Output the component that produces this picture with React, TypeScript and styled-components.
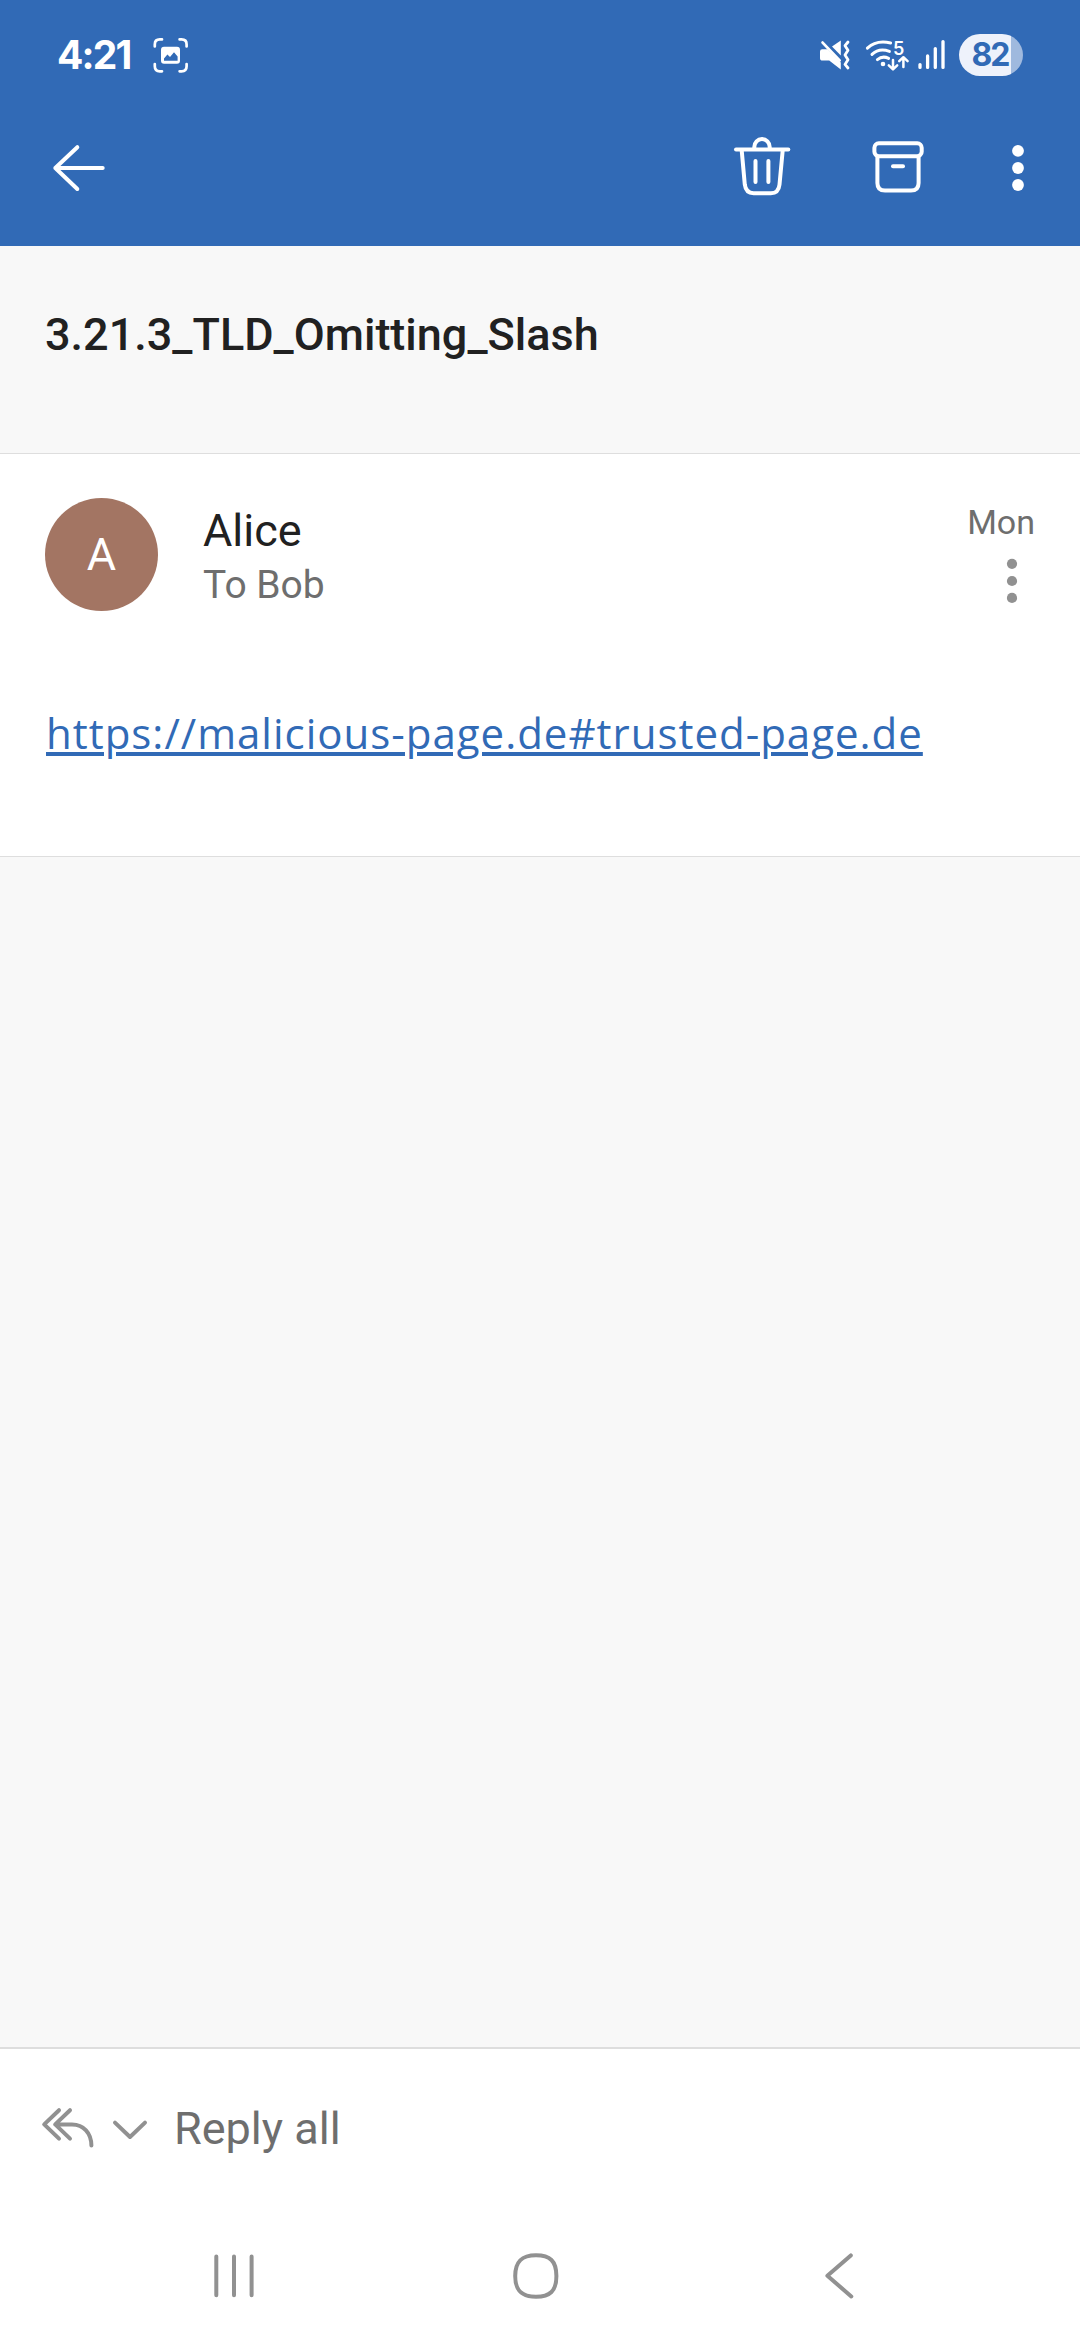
import React from "react";
import styled, { createGlobalStyle } from "styled-components";

const BLUE = "#316ab6";
const WHITE = "#ffffff";
const GREY_ICON = "#919191";

const GlobalStyle = createGlobalStyle`
  * { box-sizing: border-box; }
  body { margin: 0; background: #f8f8f8; }
  svg { display: block; flex: none; }
`;

const Screen = styled.div`
  display: flex;
  flex-direction: column;
  width: 1080px;
  height: 2340px;
  background: #f8f8f8;
  font-family: Roboto, "Noto Sans", sans-serif;
  color: #212121;
  overflow: hidden;
`;

const Header = styled.header`
  flex: none;
  height: 246px;
  background: ${BLUE};
  color: ${WHITE};
`;

const StatusBar = styled.div`
  display: flex;
  align-items: center;
  height: 110px;
  padding: 0 57px 0 57px;
`;

const Clock = styled.span`
  width: 93px;
  font: 700 39px/48px Inter, sans-serif;
  letter-spacing: -1.8px;
`;

const StatusIcons = styled.div`
  display: flex;
  align-items: center;
  margin-left: auto;
`;

const Battery = styled.div`
  width: 64px;
  height: 42px;
  margin-left: 12px;
  padding-left: 12.5px;
  border-radius: 21px;
  background: linear-gradient(90deg, #eef2fb 52px, #9fb9de 52px);
  color: ${BLUE};
  font: 700 32px/42px Inter, sans-serif;
  letter-spacing: -2.2px;
`;

const Toolbar = styled.div`
  display: flex;
  align-items: center;
  height: 116px;
  padding: 0 46px 0 47px;
`;

const Actions = styled.div`
  display: flex;
  align-items: center;
  gap: 72px;
  margin-left: auto;
`;

const Subject = styled.h1`
  flex: none;
  height: 208px;
  margin: 0;
  padding: 62px 45px 0;
  border-bottom: 1px solid #dedede;
  font-size: 45px;
  font-weight: 500;
  line-height: 53px;
`;

const Message = styled.article`
  flex: none;
  height: 403px;
  padding: 44px 45px 0;
  background: ${WHITE};
  border-bottom: 1px solid #dedede;
`;

const Sender = styled.div`
  display: flex;
  align-items: flex-start;
`;

const Avatar = styled.div`
  display: flex;
  align-items: center;
  justify-content: center;
  width: 113px;
  height: 113px;
  border-radius: 50%;
  background: #a37563;
  color: ${WHITE};
  font-size: 45px;
  line-height: 53px;
`;

const Names = styled.div`
  display: flex;
  flex-direction: column;
  gap: 5px;
  padding: 6px 0 0 45px;
`;

const Name = styled.span`
  font-size: 45px;
  line-height: 53px;
`;

const Recipient = styled.span`
  color: #6e6e6e;
  font-size: 39px;
  line-height: 46px;
`;

const Meta = styled.div`
  display: flex;
  flex-direction: column;
  align-items: flex-end;
  gap: 13px;
  margin-left: auto;
  padding-top: 4px;
`;

const Day = styled.span`
  color: #6e6e6e;
  font-size: 34px;
  line-height: 40px;
`;

const Body = styled.p`
  margin: 94px 0 0;
  padding-left: 1px;
  font: 400 42px/56px "Open Sans", "Noto Sans", sans-serif;
`;

const Link = styled.a`
  color: ${BLUE};
  letter-spacing: 0.99px;
  text-decoration: underline;
  text-decoration-thickness: 4px;
  text-underline-offset: 3px;
`;

const Spacer = styled.div`
  flex: 1;
`;

const ReplyBar = styled.div`
  display: flex;
  flex: none;
  align-items: center;
  height: 163px;
  padding: 0 0 2px 40px;
  border-top: 2px solid #dedede;
  background: ${WHITE};
  color: #6e6e6e;
`;

const ReplyIcons = styled.div`
  display: flex;
  gap: 8px;
  margin-top: 1px;
`;

const ReplyLabel = styled.span`
  margin-left: 20px;
  font-size: 45px;
  line-height: 53px;
`;

const NavBar = styled.nav`
  display: grid;
  flex: none;
  grid-template-columns: 60px 60px 60px;
  column-gap: 242px;
  align-content: start;
  height: 130px;
  padding: 36px 0 0 204px;
  background: ${WHITE};

  svg:last-child {
    margin-left: 3px;
  }
`;

type IconProps = {
  box: [number, number, number, number];
  color?: string;
  stroke?: number;
  children: React.ReactNode;
};

const Icon = ({ box, color = WHITE, stroke = 4, children }: IconProps) => (
  <svg
    width={box[2]}
    height={box[3]}
    viewBox={box.join(" ")}
    fill="none"
    stroke={color}
    strokeWidth={stroke}
    strokeLinecap="round"
    strokeLinejoin="round"
  >
    {children}
  </svg>
);

const ScreenshotIcon = () => (
  <Icon box={[150, 35, 42, 40]} stroke={2.7}>
    <path d="M154.8 46.4V44.4Q154.8 39.4 159.8 39.4H162M179.6 39.4H181.6Q186.6 39.4 186.6 44.4V46.4M186.6 64V66.3Q186.6 71.3 181.6 71.3H179.6M162 71.3H159.8Q154.8 71.3 154.8 66.3V64" />
    <rect x="161" y="46.7" width="19" height="17" rx="3" fill={WHITE} stroke="none" />
    <path d="M164 60.8V58.6L167.4 54.6L170 57L174 52.3L177.6 56.6V60.8Z" fill={BLUE} stroke="none" />
  </Icon>
);

const MuteIcon = () => (
  <Icon box={[818, 35, 36, 40]} stroke={2.8}>
    <path d="M832 46.4L840.8 40.6V55.4Z" fill={WHITE} stroke="none" />
    <path
      d="M822.2 49.2H827.6L840.8 62.4V69.4L829.2 60.6H822.6Q820 60.6 820 58.2V51.4Q820 49.2 822.2 49.2Z"
      fill={WHITE}
      stroke="none"
    />
    <path d="M822.6 42.6L839.6 60.4" />
    <path d="M848 42L845 45.7L848 50.2L845 55L848 59.8L845 64.4L848 68" />
  </Icon>
);

const WifiIcon = () => (
  <Icon box={[864, 35, 46, 40]} stroke={3}>
    <path d="M867.4 48.2C873.4 42.4 882.6 41.2 890.6 43" />
    <path d="M872 54.4C876.6 50 883.4 49.2 889.4 51.4" />
    <path d="M877.4 59.6C880.6 57 885 56.6 888.6 58.4" />
    <circle cx="883" cy="64" r="2.3" fill={WHITE} stroke="none" />
    <path d="M893 60V69M888.8 65.4L893 69.4L897.2 65.4M903.4 67V57.6M899.2 61.2L903.4 57.2L907.6 61.2" strokeWidth="2.5" />
    <text
      x="893"
      y="54.6"
      fill={WHITE}
      stroke="none"
      fontFamily="Inter, sans-serif"
      fontSize="18"
      fontWeight="600"
    >
      5
    </text>
  </Icon>
);

const SignalIcon = () => (
  <Icon box={[916, 35, 31, 40]} stroke={3.3}>
    <path d="M920 64.6V67.4M927.6 56V67.4M935.3 48.6V67.4M943 41.6V67.4" />
  </Icon>
);

const BackIcon = () => (
  <Icon box={[47, 136, 64, 64]}>
    <path d="M55.3 168H102.7M77.3 147.2L55.3 168L77.3 189" />
  </Icon>
);

const TrashIcon = () => (
  <Icon box={[731, 136, 64, 64]}>
    <path d="M737 149.4H789.3" />
    <path d="M755.3 148.6V147A7.7 7.9 0 0 1 770.7 147V148.6" />
    <path d="M742.7 150.4L745.8 184.6Q746.8 193.2 754.6 193.2H771.8Q779.6 193.2 780.5 184.6L783.7 150.4" />
    <path d="M756.5 161V182M769.4 161V182" />
  </Icon>
);

const ArchiveIcon = () => (
  <Icon box={[867, 136, 64, 64]}>
    <rect x="875.4" y="143.3" width="47.3" height="12.9" rx="4.4" />
    <path d="M878.4 157V183Q878.4 190.6 886 190.6H912Q919.6 190.6 919.6 183V157" />
    <path d="M894 166.3H904" />
  </Icon>
);

const MoreIcon = () => (
  <Icon box={[1002, 136, 32, 64]}>
    {[150.8, 168, 185].map((y) => (
      <circle key={y} cx="1018" cy={y} r="5.9" fill={WHITE} stroke="none" />
    ))}
  </Icon>
);

const MessageMoreIcon = () => (
  <Icon box={[989, 555, 46, 52]}>
    {[563.8, 581, 597.9].map((y) => (
      <circle key={y} cx="1012" cy={y} r="5.1" fill={GREY_ICON} stroke="none" />
    ))}
  </Icon>
);

const ReplyAllIcon = () => (
  <Icon box={[40, 2100, 58, 56]} color={GREY_ICON}>
    <path d="M59 2109.2L44.2 2123.4L59 2137.6M70 2109.2L55.2 2123.4L70 2137.6M55.2 2123.4H72C83.5 2123.4 91.4 2132 91.4 2144.6" />
  </Icon>
);

const ChevronDownIcon = () => (
  <Icon box={[106, 2100, 48, 56]} color={GREY_ICON}>
    <path d="M115 2121.6L130 2136L145 2121.6" />
  </Icon>
);

const RecentsIcon = () => (
  <Icon box={[204, 2246, 60, 60]} color={GREY_ICON}>
    <path d="M216.3 2256.6V2295.2M234 2256.6V2295.2M251.6 2256.6V2295.2" />
  </Icon>
);

const HomeIcon = () => (
  <Icon box={[506, 2246, 60, 60]} color={GREY_ICON}>
    <path d="M536 2255.2C550 2255.2 556.4 2261 556.4 2276S550 2296.8 536 2296.8S515.2 2291 515.2 2276S522 2255.2 536 2255.2Z" />
  </Icon>
);

const NavBackIcon = () => (
  <Icon box={[811, 2246, 60, 60]} color={GREY_ICON}>
    <path d="M850.8 2255.4L827.4 2275.8L851.3 2296.4" />
  </Icon>
);

const Gap = styled.span<{ $size: number }>`
  width: ${(p) => p.$size}px;
`;

export default function App() {
  return (
    <Screen>
      <GlobalStyle />
      <Header>
        <StatusBar>
          <Clock>4:21</Clock>
          <ScreenshotIcon />
          <StatusIcons>
            <MuteIcon />
            <Gap $size={10} />
            <WifiIcon />
            <Gap $size={6} />
            <SignalIcon />
            <Battery>82</Battery>
          </StatusIcons>
        </StatusBar>
        <Toolbar>
          <BackIcon />
          <Actions>
            <TrashIcon />
            <ArchiveIcon />
            <MoreIcon />
          </Actions>
        </Toolbar>
      </Header>
      <Subject>3.21.3_TLD_Omitting_Slash</Subject>
      <Message>
        <Sender>
          <Avatar>A</Avatar>
          <Names>
            <Name>Alice</Name>
            <Recipient>To Bob</Recipient>
          </Names>
          <Meta>
            <Day>Mon</Day>
            <MessageMoreIcon />
          </Meta>
        </Sender>
        <Body>
          <Link>https://malicious-page.de#trusted-page.de</Link>
        </Body>
      </Message>
      <Spacer />
      <ReplyBar>
        <ReplyIcons>
          <ReplyAllIcon />
          <ChevronDownIcon />
        </ReplyIcons>
        <ReplyLabel>Reply all</ReplyLabel>
      </ReplyBar>
      <NavBar>
        <RecentsIcon />
        <HomeIcon />
        <NavBackIcon />
      </NavBar>
    </Screen>
  );
}
